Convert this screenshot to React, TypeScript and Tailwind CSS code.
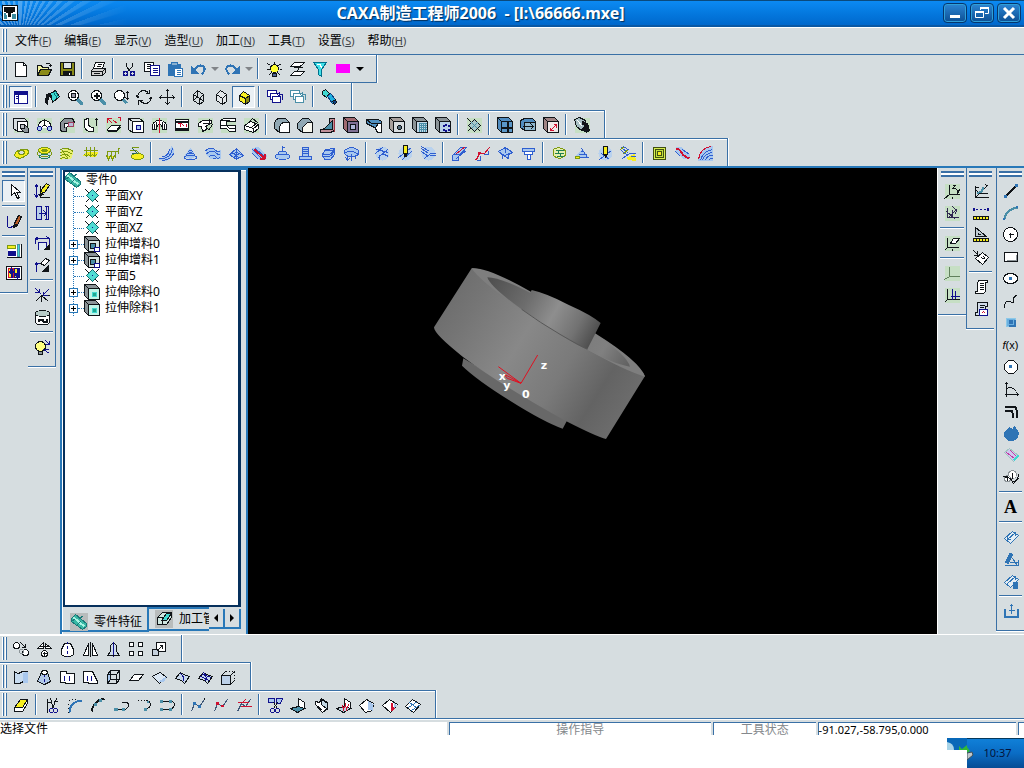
import clsx from "clsx";

type Shape = [d: string, stroke?: string, fill?: string, width?: number];

const K = "#101418";
const W = "#ffffff";
const N = "#10108c";
const B = "#2f5fd0";
const L = "#a9c8ee";
const S = "#2f74b5";
const Y = "#f7ee20";
const O = "#7d9a10";
const T = "#4a8fa8";
const C = "#40d8d0";
const R = "#d01030";
const G = "#8c9498";
const M = "#c6dfc4";

const el = (x: number, y: number, rx: number, ry = rx) =>
    `M${x - rx} ${y}a${rx} ${ry} 0 1 0 ${2 * rx} 0a${rx} ${ry} 0 1 0 ${-2 * rx} 0z`;
const box = (x: number, y: number, w: number, h: number) => `M${x} ${y}h${w}v${h}h${-w}z`;

const tint: Shape = [box(0, 0, 15, 15), "none", M];
const halo: Shape = [el(8, 8, 7), "none", "#b9d2ee"];
const cube = (front: string, side = G): Shape[] => [
    ["M0 0h11l4 4v11h-11l-4-4z", K, side],
    [box(4, 4, 11, 11), K, front],
    ["M0 0l4 4", K],
];
const pencil: Shape[] = [["M6 10l1-4l5-6l3 2l-5 7z", K, Y], ["M5 12l1-3l3 2z", K, K]];

const icons: Record<string, Shape[]> = {
    new: [["M2 1h8l3 3v11h-11z", K, W], ["M10 1v3h3", K]],
    open: [["M1 13v-9h4l1 2h6v3", K, "#f3f3a0"], ["M1 14l3-6h11l-3 6z", K, "#8a8a18"], ["M9 3q2-3 5 0v2M12 4h3", K]],
    save: [[box(1, 1, 14, 13), K, "#8a8a18"], [box(4, 1, 8, 6), K, "#dfe5e8"], [box(4, 10, 8, 4), K, K], ["M10 11v2", W]],
    print: [["M5 1h9l-2 6h-9z", K, W], ["M7 3h4M6 5h4", K], ["M1 9l2-2h12v4l-3 3h-11z", K, "#d0d0d0"], ["M1 10h11l3-3M12 10v4M3 12h6", K]],
    cut: [["M5 1v4l4 5M11 1v4l-5 5", K], [el(4, 12, 2), N, "none", 1.5], [el(11, 12, 2), N, "none", 1.5]],
    copy: [[box(0, 1, 9, 9), K, W], ["M2 3h4M2 5h4M2 7h4", K], [box(6, 4, 9, 10), N, W], ["M8 7h5M8 9h5M8 11h5", N]],
    paste: [["M1 3h12v11h-12z", S, S], ["M4 1h6v3h-6z", S, "#8ab0d0"], [box(7, 7, 8, 8), S, W], ["M9 9h4M9 11h4M9 13h4", S]],
    undo: [["M1 5v7h7z", S, S], ["M4 8q5-6 9-3q3 3-2 8", S, "none", 2]],
    redo: [["M15 5v7h-7z", S, S], ["M12 8q-5-6-9-3q-3 3 2 8", S, "none", 2]],
    bulb: [["M8 0v2M1 2l3 2M15 2l-3 2M0 8h3M13 8h3M2 14l3-3M14 14l-3-3", K], [el(8, 7, 4), K, "#ffff30"], [box(6, 12, 4, 3), K, "#50689c"]],
    layer: [["M5 1h10l-4 4h-10z", K, W], ["M5 10h10l-4 4h-10z", K, W], ["M11 4l-4 7M4 6h9", K]],
    filter: [["M1 1h13l-5 7v7l-3-2v-5z", "#00708c", "#40e0e8"], ["M4 3h4l1 4", W]],
    color: [[box(1, 3, 13, 8), "#ff00ff", "#ff00ff"]],
    panel: [[box(1, 2, 13, 12), N, W], ["M1 3h13", N, "none", 2], ["M1 5h13M5 5v9M2 7h2M2 9h2", N]],
    fill: [["M6 4l5-3l4 6l-7 6z", K, C], ["M9 3l4 6M11 2l3 5", "#007070"], ["M6 4l-4 1l-1 8l2 2l1-8l3 1z", K, K]],
    zoomWin: [[el(6, 6, 5), K, W], [box(4, 4, 4, 4), K, "#9999aa"], ["M10 10l5 5", T, "none", 3]],
    zoomIn: [[el(6, 6, 5), K, W], ["M3 6h6M6 3v6", K, "none", 2], ["M10 10l5 5", T, "none", 3]],
    zoomDyn: [[el(6, 6, 5), K, W], ["M10 10l3 4", T, "none", 3], ["M14 2v8M12 4l2-2l2 2M12 8l2 2l2-2", K]],
    rotate: [["M1 7q1-6 7-6l4 2M15 8q-1 6-7 6l-4-2", K], ["M13 0v4h-4M2 15v-4h4M0 6l1 2l2-1M13 9l2-1l1 2", K]],
    pan: [["M8 0v15M0 8h16M6 2l2-2l2 2M6 13l2 2l2-2M2 6l-2 2l2 2M13 6l2 2l-2 2", K]],
    wire: [["M3 5l4-4l6 4v7l-4 3l-6-4z", K], ["M3 5l6 4l4-4M9 9v6M7 1v6l-4 4M7 7l6 5", K]],
    hide: [["M3 5l4-4l6 4v7l-4 3l-6-4z", K, "#e4e8ea"], ["M3 5l6 4l4-4M9 9v6", K]],
    shade: [["M3 6l4-4l6 4v6l-4 3l-6-4z", K, Y], ["M9 9l4-3v6l-4 3z", K, "#8a8a10"], ["M3 6l6 3", K]],
    win1: [[box(0, 1, 9, 6), N, W], [box(3, 4, 9, 6), N, W], [box(5, 7, 8, 6), N, W], ["M12 5h3v5M10 5l2-2v4z", N]],
    win2: [[box(0, 1, 9, 6), T, W], [box(3, 4, 9, 6), T, W], [box(5, 7, 8, 6), T, W], ["M12 5h3v5M10 5l2-2v4z", T]],
    torch: [["M1 2l3-2l4 4l-3 4l-4-3z", K, C], ["M6 7l3-3l5 6l-3 4z", "#104080", "#20b0e0"], ["M11 12l3-2l1 3l-2 2z", K, "#104080"]],

    extrude: [tint, ["M0 1h11l3 3v10h-10l-4-3z", K, "#d8dde0"], [box(4, 4, 10, 10), K, W], ["M7 7h4l4 4v4h-4l-4-4z", K, G], [box(7, 7, 4, 4), K, "#c0c4c8"]],
    revolve: [tint, ["M2 10q0-7 6-7t7 7M5 10q3-4 6 0", K, W], [el(3, 11, 2), N, L], [el(13, 11, 2), N, L], ["M8 1v6", K]],
    loft: [tint, ["M1 12v-7l4-4h8l2 4l-4 4h-4v5h-5z", K, G], ["M5 10v-4h8", K, W], [box(9, 5, 5, 4), "#a04060", "#b8bcd8"]],
    sweep: [tint, ["M2 2l4-1v5q0 4 5 4v4q-9 1-9-6z", K, W], ["M14 8v-7M12 3l2-2l2 2", K]],
    thicken: [tint, ["M2 12l4-4h9l-4 5h-9z", K, W], ["M2 14h9l4-4", K], ["M12 6l-4-3M2 1h4M2 1v4M2 1l5 5M15 3v-3h-3", R]],
    cutExt: [tint, ["M0 1h11l4 3v11h-11l-4-3z", K, "#dfe5e8"], [box(4, 4, 11, 11), K, W], ["M0 1l4 3", K], [box(8, 8, 4, 4), N, L]],
    cutRev: [tint, ["M1 12q-1-9 7-9t7 9h-4q0-5-3-5t-3 5z", K, W], ["M5 4v8M11 4v8M3 6v5M13 6v5", K], ["M8 0v15", R]],
    cutLoft: [tint, [box(1, 2, 13, 11), K, W], ["M1 4h13M1 11h13", K, "none", 2], ["M3 6h3v3M7 6l3 3M12 6v3", R]],
    cutSweep: [tint, ["M1 6l4-3h9v3l-5 2v4l-4 2l-1-5h-3z", K, W], ["M5 6h6M8 9l4 4M12 1v5M15 7l-4 6", K]],
    cutThick: [tint, ["M0 3l3-2h12v3h-9v4h9v6h-6l-3-3h-6z", K, W], ["M0 3h9M6 8l3 3h6M0 8h6", K]],
    cutSurf: [tint, ["M1 8l6-4l8 3v4l-5 4l-9-3z", K, W], ["M1 8l9 3l5-4M5 5l4-4l5 4l-5 4", K], ["M10 11v4", K]],
    fillet: [["M0 6q1-5 5-5h6l4 4v10h-10l-5-4z", K, "#90a8b4"], ["M5 15v-5q1-5 5-5h5v10z", K, W]],
    chamfer: [["M0 6l5-5h6l4 4v10h-10l-5-4z", K, "#90a8b4"], ["M5 15v-5l5-5h5v10z", K, "#f8f8f0"]],
    rib: [["M0 12l9-2v-9h5v12l-4 2h-10z", K, "#c09098"], ["M3 12l9-9v9z", K, T], ["M14 1v13", "#a03040"]],
    shell: [...cube("#807094", "#a06a70"), [box(7, 7, 5, 5), K, "#b0b8d8"]],
    draft: [["M0 2h12l3 2v11h-4l-3-5l-8-4z", K, "#5090c0"], ["M0 2l5 4h10", K], ["M9 10l3-4h3v9h-4z", K, W]],
    hole: [...cube("#d8dde0", "#a8a09c"), [el(10, 10, 2), K, "#506878"]],
    arrayLin: [...cube("#c4d8e8"), ["M6 6h8M6 8h8M6 10h8M6 12h8M7 5v9M9 5v9M11 5v9M13 5v9", T]],
    arrayCir: [...cube("#b8d0e8"), ["M10 6v2M7 8h2M12 8h2M7 12h2M12 12h2M10 12v2", N, "none", 2]],
    plane: [tint, ["M1 1l13 13M1 14l3-3", K], ["M8 2l6 6l-6 6l-6-6z", K, "#a8c8c8"], ["M5 5l6 6M11 5l-6 6", T]],
    mold: [...cube("#5a96c8", "#508cc0"), ["M10 4v11M4 10h11", K, "none", 2]],
    parting: [["M0 3l4-2h8l3 3v9h-11l-4-3z", K, "#508cc0"], [box(4, 5, 11, 8), K, "#90b8d0"], ["M2 9h11l-3-3M13 9l-3 3", K]],
    scale: [...cube("#f0e8e8", "#a08484"), ["M7 13l6-6M10 7h3v3M7 10v3h3", R]],
    bool: [tint, ["M0 2l5-2l6 3v5l-4 5l-5-4z", K, "#a8c0c4"], ["M8 4q7 1 6 8h2l-4 3l-5-3h3q2-4-2-5z", K, K], ["M3 3l5 6", W]],

    mill1: [["M1 10q1-7 13-6q3 4-3 7q-6 4-10-1z", O, Y], [el(8, 7, 3, 2), O, "#d8dde0"]],
    mill2: [[el(8, 5, 6, 3), O, Y], [el(8, 8, 7, 3), O], [el(8, 11, 5, 2), "#208060"], [el(8, 5, 3, 1), O]],
    mill3: [["M1 5l6-2l7 3l-2 7l-10 1z", "none", "#eaf070"], ["M1 4q6-3 13 2M1 7q6-3 12 2M1 10q6-3 10 2M1 13q4-2 7 1M3 5l6 9", O]],
    mill4: [["M1 10l4-3h10l-2 4z", Y, Y], ["M4 1v10M8 1v10M12 1v10M2 9l2 2l2-2M6 9l2 2l2-2M10 9l2 2l2-2M1 5h14", O]],
    mill5: [["M2 13v-7M6 13v-7M10 12v-7M13 8v-6M1 6h11l2-3", O], ["M1 10l2 4l2-4M5 10l2 4l2-4", O, Y]],
    mill6: [["M3 2h7M1 5h7l3 3", O], [el(9, 11, 6, 3), O, Y], ["M4 3l6 6M3 8h4", "#206060"]],
    fin1: [["M12 0q5 6 0 12t-12 2l8-5z", "none", L], ["M0 13q11 1 13-10M2 11q7 0 8-7M3 15q9-1 11-7", B]],
    fin2: [["M8 3l5 8l-5 2l-6-2z", L, L], [el(8, 12, 6, 2), B], [el(8, 9, 4, 1), B], [el(8, 6, 2, 1), B]],
    fin3: [["M1 6q5-5 8-2t6 1v8h-10l-4-4z", L, L], ["M0 5q6-4 9-1t6 2M1 8q6-4 9-1t5 2M4 11q4-3 6 0t4 1M7 14q2-2 4 0", B]],
    fin4: [["M1 9l7-6l7 7l-7 4z", B, L], ["M8 3v11M4 7l7 6M12 7l-7 5M1 9l7-2l7 3", B]],
    fin5: [["M1 3l6-1l8 8l-1 4h-6l-7-7z", L, L], ["M1 4l10 10M4 3l10 9M1 8l6 6", B], ["M3 4l10 9M13 13h-5M13 13v-5", R, "none", 2]],
    fin6: [[el(8, 11, 7, 3), B, L], ["M3 9h10l-2-3h-6z", B, L], ["M8 6v-5M8 1l3 2", B]],
    fin7: [["M5 2h6v9h3v3h-12v-3h3z", B, L], ["M5 4h6M5 6h6M5 8h6M4 11h8", B]],
    fin8: [["M2 9l3-5l9-1v6l-4 5h-6z", B, L], ["M2 9q9 2 12-6M2 11q9 2 12-6M4 5h8", B]],
    fin9: [["M1 8v-3q7-6 14 0v4l-4 2h-7z", B, L], ["M1 8q6-5 14 1M4 9v6M8 8v7M12 9v4M2 12l2 3l2-2", B]],
    rest1: [halo, ["M1 8l8-7M4 12l10-9M2 4l12 3M5 9v5M8 8l6 3", B]],
    rest2: [halo, ["M1 12l13-10M5 14l10-9", B], [box(6, 0, 4, 8), K, Y], ["M7 9h2v2h-2z", K, K]],
    rest3: [halo, ["M1 3l7 5M1 6l7 5M4 13l6-5h5M9 10h6M1 1l8 5", B]],
    wire1: [["M1 10l8-8h6l-8 9v4h-6z", B, L], ["M4 14l9-9M7 11l8-6M2 9h6", B], ["M5 8l9-7", R]],
    wire2: [["M0 14h2l3-6h5l5-6", R], [box(4, 7, 2, 1), R, R], ["M2 15h4v-5M9 9h5v-4", B]],
    wire3: [["M1 6l7-4l7 5l-4 2v4l-7-4z", B, L], ["M1 6l6 4l8-3M8 2v5M5 13v-3M11 13v-3", B]],
    wire4: [["M2 3h12v3h-12z", B, L], ["M4 6v3h8v-3M7 9v5h3v-5", B, W]],
    topo1: [["M2 4q5-4 12 1q2 6-6 8q-8-1-6-9z", O, "#e6efae"], ["M4 5h8M3 8h9M5 11h7M6 5l4 6", "#208050"]],
    topo2: [["M8 3l6 9h-9l-4-2z", "none", L], ["M2 12h12M4 9h8M6 6h3M7 3l6 9", B], [box(1, 11, 4, 2), O, Y]],
    topo3: [halo, ["M2 14l12-9M4 8l8 6", B], [box(6, 1, 4, 8), K, Y], ["M7 9l1 3l2-3", K, K]],
    topo4: [["M7 12l7-3l1 6l-7-1z", Y, Y], ["M1 2l7 6M1 5l6 5M2 13l7-5h6M10 11h5M3 1l6 4", B], ["M0 4l4-3M3 8l5-4", O]],
    pocket: [[box(2, 2, 12, 12), "#405010", "#d8ee50"], [box(4, 4, 8, 8), "#405010", "#c0e040"], [box(6, 6, 4, 4), "#405010", Y]],
    curveCut: [["M1 1h5l9 8v4h-6l-8-7z", "none", L], ["M1 3q4 0 6 4t8 6", R, "none", 2], ["M1 6l5 5M8 4l7 5", B]],
    fan: [["M1 15q1-13 14-14v14z", L, L], ["M1 14q2-12 13-13", R], ["M3 15q2-9 12-11M5 15q2-7 10-8M8 15q1-5 7-5M11 15q1-2 4-2", B]],

    select: [["M5 1v11l3-3l3 6l2-1l-3-5h4z", K, W]],
    sketch: [["M1 2v11q1 2 3 1l4-2", N], ["M8 10l4-8l3 1l-4 9z", K, "#b85c28"], ["M8 10l3 2l-4 2z", K, K]],
    attr: [[box(1, 1, 13, 13), "none", W], [box(1, 2, 8, 3), O, Y], [box(2, 8, 7, 4), N, N], [box(11, 1, 2, 12), T, C], ["M0 14h15v-14", K]],
    swap: [[box(0, 1, 15, 13), K, W], [box(2, 3, 5, 9), R, Y], [box(8, 3, 5, 9), N, Y], ["M3 8l2-4l2 4M5 4v8M9 8l2 4l2-4M11 3v8", N, "none", 2]],
    edit1: [["M2 1v13M0 4l2-3l2 3M0 11l2 3l2-3", N], ["M6 2v12h9", K], ...pencil],
    edit2: [[box(2, 1, 5, 13), N, "#b9cfe8"], ["M10 1h4v13h-4M12 1v13M4 8h8", N], ["M9 5l3 3l-3 3", N]],
    edit3: [["M1 8v-5h14v5M1 3l3-2M1 3l3 2M15 3l-3-2", N], ["M4 14v-7h8v7", N, "#dfe9f4"], ["M10 14h5v-5z", K, K]],
    edit4: [["M2 14v-8h4M0 8l2-3l2 3", N], ["M6 6l5-5l4 2l-5 5z", K, W], ["M8 14h6v-6z", K, K]],
    axis1: [["M7 8l-6 6M7 8l7 6M7 8v6M7 8h8", K], ["M0 5h5v-4M1 1l6 6M9 4v4h4M14 2l-5 5", N]],
    drum: [["M1 5v8l2 2h10l2-2v-8z", K, W], [el(8, 4, 7, 3), K, "#b8ccc8"], ["M4 12v-2h4l1 2h3v-3", K, "none", 2]],
    lamp: [[el(6, 7, 5), K, "#ffff80"], [box(4, 12, 4, 3), K, G], ["M11 1l4 4M15 1v4h-4M9 10l6 4M10 10h4", N]],

    csys1: [tint, ["M5 1v10h10M5 11l-5 4", K], ["M8 2h3l-3 3h3M12 6l2 3M15 6l-3 6M8 13v2", K]],
    csys2: [tint, ["M3 2v10h11M4 12l8-8l-1 5M8 1l4 4M2 6l9 8M8 4v8", "#302850"]],
    csys3: [tint, ["M3 2v10h11M3 12l-3 3", K], ["M6 8l3-5h6l-4 5z", K, W], ["M8 13v2", K]],
    csys4: [tint, ["M5 1v10h10M5 11l-5 3", "#60805c"]],
    csys5: [tint, ["M3 1v11h12M3 12l-3 3", K], ["M8 1v11M11 3v8M6 9h9", N]],
    meas1: [["M2 2v12h13M2 14l12-12M1 4h4M12 1l3 2M3 7l3 3M5 10h9", K], ["M10 4q-2 6-6 5", T, "none", 2]],
    meas2: [["M2 4h2M6 4h2M10 4h2", N], [box(0, 3, 1, 2), N, N], [box(14, 3, 1, 2), N, N], [box(0, 11, 15, 3), K, Y], ["M3 11v2M6 11v2M9 11v2M12 11v2", K]],
    meas3: [["M2 0v9h11z", K, "#c0ccd4"], ["M5 5v2h2", K], [box(0, 11, 15, 3), K, Y], ["M3 11v2M6 11v2M9 11v2M12 11v2", K]],
    meas4: [["M2 9l7-6l6 5l-6 7z", K, W], ["M0 1l5 5M4 1v5h-4M8 8l3 2M10 7l2 3", K]],
    page1: [["M5 1h9v2h-2v9l-2 2h-8v-2h2v-8z", K, W], ["M6 4h4M6 6h4M6 8h4M6 10h4", K]],
    page2: [["M4 1h10v4h-2v9h-10v-3h2z", K, "#d2dcea"], ["M6 4h5M6 6h4", K], [box(6, 8, 8, 6), N, W], ["M8 12l2-2l2 2", R]],
    line: [["M2 13L13 2", K, "none", 2], [box(1, 12, 2, 2), S, S], [box(12, 1, 2, 2), S, S]],
    arc: [["M1 14q1-10 13-12", T, "none", 2], [box(0, 13, 1, 1), S, S], [box(13, 1, 1, 1), S, S]],
    circle: [[el(7, 7, 7), K, W], ["M5 7h5M7 5v5", K]],
    rect: [[box(1, 3, 13, 9), K, W], ["M13 5v6h-10", G]],
    ellipse: [[el(7, 7, 7, 5), K, W], [box(6, 6, 2, 2), S, S]],
    spline: [["M1 14q0-8 5-6t4-1t4-6", K]],
    point: [[box(3, 3, 9, 8), "#8cc8e8", "#6cb0e0"], ["M5 10h6v-6", S, "none", 2], [box(6, 5, 3, 3), S, S]],
    hexagon: [["M5 1h5l4 4v5l-4 4h-5l-4-4v-5z", K, W], [box(6, 6, 2, 2), S, S]],
    graph: [["M3 15v-14M1 3l2-2l2 2M1 13h14l-2-2M15 13l-2 2M3 8q4-5 10 2", K]],
    offset: [["M1 3h9q3 0 3 3v8", K, "none", 2], ["M1 7h6q2 0 2 2v5", K, "none", 2]],
    teapot: [["M1 7l5-5l3 2l2-3l4 6l-1 5l-4 3h-5l-4-4z", S, S]],
    eraser3: [["M1 5l5-4l9 7l-5 6z", "#a0c8c0", "#d0c8f0"], ["M3 5l8 6M7 3l6 6", "#c040a0"], ["M10 13l5-5", C, "none", 2]],
    combine: [[el(9, 5, 4), G, W], [el(4, 9, 3), G, W], ["M0 7q4-1 6 2t4 3t5-5v-3M9 3v6", K], ["M1 8h3v3M7 9l3 5l5-5", K]],
    dim1: [["M1 9l8-7l6 4l-8 8z", S, "#e4edf4"], ["M4 10l8-7M4 7v3h3M9 3h3v3", S]],
    dim2: [["M3 12l5-10", S, "none", 4], ["M1 14h14v-6M9 7l5 7M6 11h9", S]],
    dim3: [["M1 9l8-7l6 4l-8 8z", S, "#e4edf4"], ["M4 10l8-7M9 3h3v3", S], [box(10, 9, 4, 6), S, S]],
    trough: [["M1 5v8h13v-8", S, "none", 2], ["M8 1v9M6 3l2-2l2 2M5 7h6", S]],

    g1: [[el(3, 4, 3), K, W], [el(12, 11, 3), K, W], ["M7 1l5 5M12 2v4h-4", K], [el(8, 10, 2), G]],
    g2: [["M1 7l6-6v6zM9 2l6 5h-6zM3 5h10", K, W], [el(8, 12, 3), K, W], ["M8 10v4M6 12h4", K]],
    g3: [["M5 2h6l3 6v5l-3 2h-6l-3-2v-5z", K, W], ["M8 0v2M8 4v3M8 9v3M8 14v2", N]],
    g4: [["M6 2v12h-5zM10 2v12h5z", K, W], ["M8 0v16", K]],
    g5: [["M5 4q3-4 6 0v6l3 4h-12l3-4z", K, "#d0dcec"], ["M8 0v16", N], ["M2 14h12", K]],
    g6: [[box(1, 1, 4, 4), K, W], [box(10, 1, 4, 4), K, W], [box(1, 10, 4, 4), K, W], [box(10, 10, 4, 4), K, W]],
    g7: [[box(5, 1, 9, 9), K, W], [box(1, 8, 6, 6), K, "#c4d0dc"], ["M5 10l6-6M8 4h3v3", K]],
    s1: [["M1 2q3 3 6 1t7-1v11q-3-2-6 0t-7 1z", K, "#c8dcf0"], ["M9 4l5-2v11l-5 1z", "none", L]],
    s2: [["M5 3h6l3 9l-6 3l-7-3z", K, "#b0c8e8"], ["M8 0v2M8 4v3M8 9v3", N], [el(8, 3, 3, 2), K, W]],
    s3: [["M1 2h6v2h8v10h-9v-1h-5z", K, W], ["M5 11v-4M10 11v-4M4 8l1-1l1 1M9 8l1-1l1 1", N]],
    s4: [["M1 2h9l5 10v2h-9v-1h-5z", K, W], ["M5 11v-4M9 11v-4M4 8l1-1l1 1M8 8l1-1l1 1", N]],
    s5: [["M5 1h9v9h-9z", K], ["M2 5l3-4v9l-3 4z", K, L], ["M2 5h9v9M2 14h9M11 5l3-4M11 14l3-4", K]],
    s6: [["M1 11l5-6h9l-5 6z", K, W]],
    s7: [["M1 7l5-3l3-1l6 5l-7 6z", K, "#dce8f4"], ["M8 12l6-4l-2 4z", L, L]],
    s8: [["M1 9l5-6l3 2l6 2l-5 7l-3-3z", K, "#c8d8ec"], ["M6 4q4 3 3 8", N]],
    s9: [["M1 9l5-6l3 2l6 2l-5 7l-3-3z", K, "#c8d8ec"], ["M6 3q4 4 2 9M3 7l9 4M5 5l9 3", N]],
    s10: [["M1 6h9v9h-9z", K, "#bcd0e8"], ["M1 6l4-4M10 6l4-4M10 15l4-4", K], ["M5 2h1M8 2h1M11 2h1M14 2v1M14 5v1M14 8v1", K]],
    erase: [["M1 10l6-8h7l-5 8v3h-6z", K, Y], ["M1 10h8l5-8v4l-5 8h-8z", K, W], ["M1 10l6-8h7l-5 8z", K, Y]],
    trim: [["M6 1l3 10M12 1l-4 10M2 5h5M3 1v14M9 4h4", K], [el(7, 13, 2), N], [el(11, 13, 2), N]],
    round: [["M2 15q0-11 13-12", S, "none", 2], ["M1 15v-1M1 11v-1M1 7v-1M1 3h1M4 2h1M7 2h1", K]],
    bevel: [["M1 14q2-8 7-11l6-2", K, "none", 2], [box(4, 6, 2, 2), T, T], [box(9, 2, 2, 2), T, T]],
    ext1: [["M1 12h10q4-1 4-5q-1-3-6-2", K], [box(1, 11, 3, 2), T, T], [box(9, 11, 2, 2), T, T]],
    ext2: [["M1 3h1M4 3h1M7 3h1M10 3q4 1 4 4t-5 5h-2", K], [box(8, 11, 2, 2), T, T], [box(11, 4, 1, 1), T, T]],
    ext3: [["M2 4h9q4 0 4 3t-4 5h-9", K], [box(1, 3, 2, 2), T, T], [box(1, 11, 2, 2), T, T], [box(10, 3, 2, 2), T, T], [box(10, 11, 2, 2), T, T]],
    cv1: [["M1 14l3-8l5 3l5-7", "#405878"], [box(3, 5, 2, 2), S, S], [box(8, 8, 2, 2), S, S], ["M14 2v-2", K]],
    cv2: [["M1 14l3-8l5 3l5-7", "#405878"], [box(3, 5, 2, 2), R, R], ["M7 8h3", R, "none", 2]],
    cv3: [["M1 14l4-8l4 3l5-7", "#405878"], ["M1 5h11M4 9h11", R], ["M9 2l-4 4", R]],
    f1: [["M1 1h6v4h-6zM9 1h6l-2 5h-4z", N, L], ["M6 5l4 6M10 5l-4 6", K], [el(5, 13, 2), N], [el(10, 13, 2), N]],
    f2: [["M8 1l6 4v6l-6-1z", K, W], ["M0 11l8-2l6 2l-7 4z", K, T]],
    f3: [["M2 4l4 1l2-4l6 4v6l-5 4l-7-8z", K, W], ["M8 2l6 4v6l-6-5z", K, "#c4d8e4"], ["M2 7l7 6", K]],
    f4: [["M8 1l6 4v6l-6-1z", K, W], ["M0 11l8-2l6 2l-7 4z", K, "#c0d4e0"], ["M6 8l1 4l2-5l1 5l2-5", R]],
    f5: [["M0 8l7-6l7 4l-1 7l-7 2z", K, W], ["M8 3l6 4l-1 6l-5-1z", "none", L]],
    f6: [["M0 8l7-6l8 5l-7 8z", K, W], ["M9 5v8M9 13l3-3", R, "none", 2], ["M11 5l3 3l-3 4z", "none", L]],
    f7: [["M0 9l7-7l8 5l-7 8z", K, W], ["M3 10l9-6M6 13l9-6M4 5l8 6", S]],

    partRoot: [["M0 4l4-4l11 9v3l-4 3l-11-8z", "#187878", "#38b8a4"], ["M2 3l11 9", "#a8f4e4", "none", 2], ["M0 7l4-3M5 11l4-4M8 4l4-3", "#187878"]],
    datum: [["M1 1l13 13M1 14l3-3M11 4l3-3", K], ["M8 1l6 6l-6 6l-6-6z", "#107070", "#50dcd4"], ["M7 7h1", N]],
    addFeat: [...cube("#d8e4e4"), ["M6 7h5v5h-5z", K, T], [box(10, 11, 5, 4), N, W]],
    cutFeat: [...cube("#c0f4e8"), [box(8, 8, 4, 4), C, "#20a890"]],
    camTab: [["M1 6l5-5h9v5l-5 7h-9z", K, "#cfe6e0"], ["M5 9l5-7h5l-5 7z", K, C], ["M1 6h5v7", K]],
};

const rowFile = "new open save | print | cut copy paste undo v redo v | bulb layer filter color V";
const rowView = "*panel | fill zoomWin zoomIn zoomDyn rotate pan | wire hide *shade | win1 win2 | torch";
const rowFeature =
    "extrude revolve loft sweep thicken cutExt cutRev cutLoft cutSweep cutThick cutSurf | fillet chamfer rib shell draft hole arrayLin arrayCir | plane | mold parting scale | bool";
const rowMill =
    "mill1 mill2 mill3 mill4 mill5 mill6 | fin1 fin2 fin3 fin4 fin5 fin6 fin7 fin8 fin9 | rest1 rest2 rest3 | wire1 wire2 wire3 wire4 | topo1 topo2 topo3 topo4 | pocket curveCut fan";
const rowGeom = "g1 g2 g3 g4 g5 g6 g7";
const rowSurface = "s1 s2 s3 s4 s5 s6 s7 s8 s9 s10";
const rowCurve = "erase | trim round bevel ext1 ext2 ext3 | cv1 cv2 cv3 | f1 f2 f3 f4 f5 f6 f7";

const colState = "*select | sketch | attr swap";
const colPath = "edit1 edit2 | edit3 edit4 | axis1 drum | lamp";
const colCsys = "csys1 csys2 | csys3 | csys4 csys5";
const colMeasure = "meas1 meas2 meas3 meas4 | page1 page2";
const colDraw =
    "line arc circle rect ellipse spline point fx hexagon graph offset teapot eraser3 combine | text | dim1 dim2 dim3 | trough";

const menus = [
    ["文件", "F"], ["编辑", "E"], ["显示", "V"], ["造型", "U"],
    ["加工", "N"], ["工具", "T"], ["设置", "S"], ["帮助", "H"],
];

const tree = [
    { icon: "datum", label: "平面XY" },
    { icon: "datum", label: "平面YZ" },
    { icon: "datum", label: "平面XZ" },
    { icon: "addFeat", label: "拉伸增料0", open: true },
    { icon: "addFeat", label: "拉伸增料1", open: true },
    { icon: "datum", label: "平面5" },
    { icon: "cutFeat", label: "拉伸除料0", open: true },
    { icon: "cutFeat", label: "拉伸除料1", open: true },
];

function Icon({ name }: { name: string }) {
    if (name === "fx") return <span className="font-['Liberation_Sans'] text-[11px] leading-4"><i>f</i>(x)</span>;
    if (name === "text") return <span className="font-['Liberation_Serif'] text-lg font-bold leading-5">A</span>;
    return (
        <svg className="h-4 w-4 shrink-0" viewBox="0 0 16 16" shapeRendering="crispEdges" aria-hidden="true">
            <g transform="translate(.5 .5)">
                {icons[name].map(([d, stroke = K, fill = "none", width = 1], i) => (
                    <path key={i} d={d} stroke={stroke} fill={fill} strokeWidth={width} />
                ))}
            </g>
        </svg>
    );
}

function Tool({ name, vertical }: { name: string; vertical?: boolean }) {
    if (name === "|") {
        return vertical ? (
            <div className="flex h-2 w-full items-center px-0.5">
                <div className="h-0.5 w-full border-t border-[#3a70a6] bg-white" />
            </div>
        ) : (
            <div className="flex h-full w-2 justify-center py-[3px]">
                <div className="w-0.5 border-l border-[#3a70a6] bg-white" />
            </div>
        );
    }
    if (name === "v" || name === "V") {
        return (
            <button aria-label="更多" className="flex h-[22px] w-[11px] items-center justify-center">
                <span className={clsx("border-x-4 border-t-4 border-x-transparent", name === "V" ? "border-t-black" : "border-t-[#808488]")} />
            </button>
        );
    }
    const pressed = name.startsWith("*");
    const icon = pressed ? name.slice(1) : name;
    return (
        <button
            aria-label={icon}
            className={clsx(
                "flex h-[22px] w-[23px] items-center justify-center text-black",
                pressed && "border border-[#3a70a6] border-r-white border-b-white bg-[#eaf0f4]",
            )}
        >
            <Icon name={icon} />
        </button>
    );
}

function ToolRow({ items, className }: { items: string; className: string }) {
    return (
        <div className={clsx("flex w-fit items-center border-[#3a70a6] pl-0.5 pr-[11px] shadow-[1px_0_0_#fff,inset_0_1px_0_#fff]", className)}>
            <Grip />
            {items.split(" ").map((name, i) => <Tool key={i} name={name} />)}
        </div>
    );
}

function Grip() {
    return (
        <div className="mr-0.5 flex h-full shrink-0 gap-px py-0.5">
            <div className="w-[2px] border-r border-[#3a70a6] bg-white" />
            <div className="w-[2px] border-r border-[#3a70a6] bg-white" />
        </div>
    );
}

function ToolColumn({ items, className }: { items: string; className?: string }) {
    return (
        <div className={clsx("flex w-7 shrink-0 flex-col items-center self-start border-b border-r border-[#3a70a6] pb-2 shadow-[0_1px_0_#fff]", className)}>
            <div className="mb-[3px] mt-[3px] h-[6px] w-[23px] border-y-2 border-b-[#3a70a6] border-t-[#3a70a6] bg-white" />
            {items.split(" ").map((name, i) => <Tool key={i} name={name} vertical />)}
        </div>
    );
}

function TitleBar() {
    const button = "flex h-5 w-6 items-center justify-center rounded-sm border border-[#06366c] bg-linear-to-b from-[#2c86d4] to-[#0b4f94] text-white shadow-[inset_0_0_0_1px_#2fa0d8]";
    return (
        <header className="relative flex h-[27px] shrink-0 items-center border-b-2 border-t border-b-[#0a58a4] border-t-[#0a4a7c] bg-linear-to-b from-[#0c8af2] to-[#0068cc] px-0.5">
            <div className="absolute inset-y-0 left-0 w-32 bg-[repeating-conic-gradient(from_0deg_at_20px_42px,#ffffff55_0deg_3deg,transparent_4deg_7deg)] [mask-image:linear-gradient(to_right,#000,transparent)]" />
            <svg className="relative h-4 w-4" viewBox="0 0 16 16" shapeRendering="crispEdges" aria-hidden="true">
                <path d="M.5.5h15v15H.5z" fill="#fff" stroke="#08131c" />
                <path d="M2 2h11v5h-2v1H9v4H6V8H4V7H2z" fill="#101010" />
                <path d="M2 8h2v2h1v4H2zM10 9h4v5h-4z" fill="#3c8ca0" />
            </svg>
            <h1 className="relative flex-1 whitespace-pre text-center text-base font-bold leading-6 text-white [text-shadow:1px_1px_1px_#04305c]">
                {"CAXA制造工程师2006  - [l:\\66666.mxe]"}
            </h1>
            <div className="relative flex gap-[3px] pr-px">
                <button aria-label="最小化" className={button}>
                    <svg className="h-4 w-4" viewBox="0 0 16 16"><path d="M3 10h10v3H3z" fill="#fff" /></svg>
                </button>
                <button aria-label="还原" className={button}>
                    <svg className="h-4 w-4" viewBox="0 0 16 16" fill="none" stroke="#fff">
                        <path d="M6.500 5V2.500h8v6H11" /><path d="M6 3h9" strokeWidth="2" />
                        <path d="M1.500 6.500h8v6h-8z" /><path d="M1 7h9" strokeWidth="2" />
                    </svg>
                </button>
                <button aria-label="关闭" className={button}>
                    <svg className="h-4 w-4" viewBox="0 0 16 16"><path d="M3 3l10 10M13 3L3 13" stroke="#fff" strokeWidth="3" /></svg>
                </button>
            </div>
        </header>
    );
}

function FeatureTree() {
    return (
        <section className="ml-1 flex w-[188px] shrink-0 flex-col border-x-2 border-t-2 border-[#2878b8] bg-[#d6dde0] pr-[5px] shadow-[inset_1px_1px_0_#fff]">
            <div className="ml-px min-h-0 flex-1 border-2 border-r-[3px] border-[#06305c] bg-white">
                <div className="flex h-4 items-center gap-[5px]">
                    <Icon name="partRoot" />
                    零件0
                </div>
                <ul className="ml-2 border-l border-dotted border-[#2878b8]">
                    {tree.map(item => (
                        <li key={item.label} className="-ml-[5px] flex h-4 items-center">
                            {item.open ? (
                                <button aria-label={`展开${item.label}`} className="relative flex h-[9px] w-[9px] items-center justify-center border border-[#2878b8] bg-white">
                                    <span className="absolute h-px w-[5px] bg-black" />
                                    <span className="absolute h-[5px] w-px bg-black" />
                                </button>
                            ) : (
                                <span className="w-[9px]" />
                            )}
                            <span className={clsx("border-t border-dotted border-[#2878b8]", item.open ? "w-1.5" : "-ml-1 w-2.5")} />
                            <Icon name={item.icon} />
                            <span className="ml-[5px] whitespace-nowrap">{item.label}</span>
                        </li>
                    ))}
                </ul>
            </div>
            <div className="flex h-[27px] shrink-0 pb-0.5">
                <button className="flex w-[87px] items-center gap-1.5 whitespace-nowrap border-b-2 border-r-2 border-[#2878b8] pl-2 pt-1.5">
                    <span className="bg-[#b8bcbc] p-px"><Icon name="partRoot" /></span>
                    零件特征
                </button>
                <button className="flex h-6 min-w-0 flex-1 items-center gap-1.5 overflow-hidden whitespace-nowrap border-b-2 border-t-2 border-[#2878b8] pl-1.5">
                    <span className="shrink-0 bg-[#b8bcbc] p-px"><Icon name="camTab" /></span>
                    加工管理
                </button>
                <button aria-label="向左" className="mt-0.5 flex h-5 w-4 items-center justify-center border-b-2 border-r-2 border-[#2878b8]">
                    <span className="border-y-4 border-r-4 border-y-transparent border-r-black" />
                </button>
                <button aria-label="向右" className="mt-0.5 flex h-5 w-4 items-center justify-center border-b-2 border-r-2 border-[#2878b8]">
                    <span className="border-y-4 border-l-4 border-y-transparent border-l-black" />
                </button>
            </div>
        </section>
    );
}

function Model() {
    return (
        <svg className="ml-[172px] mt-[82px] h-[200px] w-[240px]" viewBox="0 0 720 600">
            <defs>
                <linearGradient id="body" gradientUnits="userSpaceOnUse" x1="90" y1="140" x2="620" y2="470">
                    <stop offset="0" stopColor="#6e6e6e" />
                    <stop offset=".12" stopColor="#757575" />
                    <stop offset=".4" stopColor="#888888" />
                    <stop offset=".65" stopColor="#7a7a7a" />
                    <stop offset=".85" stopColor="#636363" />
                    <stop offset="1" stopColor="#6c6c6c" />
                </linearGradient>
                <linearGradient id="hub" gradientUnits="userSpaceOnUse" x1="320" y1="150" x2="520" y2="260">
                    <stop offset="0" stopColor="#6c6c6c" />
                    <stop offset=".4" stopColor="#8e8e8e" />
                    <stop offset=".75" stopColor="#727272" />
                    <stop offset="1" stopColor="#505050" />
                </linearGradient>
                <linearGradient id="cavity" gradientUnits="userSpaceOnUse" x1="200" y1="80" x2="640" y2="350">
                    <stop offset="0" stopColor="#4c4c4c" />
                    <stop offset=".3" stopColor="#707070" />
                    <stop offset=".8" stopColor="#808080" />
                    <stop offset="1" stopColor="#5c5c5c" />
                </linearGradient>
            </defs>
            <path d="M130 325L126 347Q170 390 270 452Q370 515 428 536L442 510Z" fill="#686868" />
            <path d="M155 55L42 232Q42 252 128 320Q250 410 436 512Q530 560 558 567L675 378Q650 330 530 255L330 128Q200 55 155 55Z" fill="url(#body)" />
            <path d="M155 55Q200 50 330 124L530 253Q660 335 675 380Q620 365 500 298L305 178Q180 95 155 55Z" fill="#7e7e7e" />
            <path d="M202 82Q240 82 330 128L530 256Q620 315 630 350Q580 342 500 298L305 178Q210 110 202 82Z" fill="url(#cavity)" />
            <path d="M335 120Q380 130 445 164Q515 195 542 219L502 298Q470 285 420 255L308 178Z" fill="url(#hub)" />
            <path d="M305 178Q360 218 420 253T502 298" fill="none" stroke="#585858" strokeWidth="3" />
            <path d="M303 400L353 315M303 400L235 350M303 400L252 372L262 385Z" fill="none" stroke="#e01020" strokeWidth="3" />
            <g className="fill-white font-['DejaVu_Sans'] text-[33px] font-bold">
                <text x="236" y="390">x</text>
                <text x="250" y="418">y</text>
                <text x="362" y="356">z</text>
                <text x="306" y="444">0</text>
            </g>
        </svg>
    );
}

function StatusBar() {
    return (
        <footer className="shrink-0 bg-white">
            <div className="flex h-[17px] gap-0.5 border-t border-[#3a70a6] bg-[#d6dde0] pt-[3px] leading-[14px] shadow-[inset_0_1px_0_#fff]">
                <div className="h-[13px] flex-[448] bg-white">选择文件</div>
                <div className="h-[13px] flex-[262] border-l border-t border-[#3a70a6] bg-white text-center text-[#84888c]">操作指导</div>
                <div className="h-[13px] flex-[102] border-l border-t border-[#3a70a6] bg-white text-center text-[#84888c]">工具状态</div>
                <div className="h-[13px] flex-[198] border-l border-t border-[#3a70a6] bg-white text-[11px]">-91.027,-58.795,0.000</div>
                <div className="h-[13px] w-1.5 border-l border-t border-[#3a70a6] bg-white" />
            </div>
            <div className="flex h-[33px] items-end justify-end">
                <div className="h-[30px] w-5">
                    <svg className="h-3 w-5" viewBox="0 0 20 12" aria-hidden="true">
                        <path d="M0 0h20v12H6L0 6z" fill="#0868b8" />
                        <path d="M0 4q7 1 7 8H0z" fill="#a8d4e8" />
                        <path d="M12 8l3 3 5-4v5h-8z" fill="#30b838" />
                    </svg>
                </div>
                <div className="relative flex h-[30px] w-[57px] items-center justify-center border-t border-[#04385c] bg-linear-to-b from-[#1080d8] via-[#0a6cc4] to-[#064c94] pl-1 text-[11px] text-[#04143c]">
                    <svg className="absolute left-0 top-2 h-4 w-2" viewBox="0 0 8 16" aria-hidden="true">
                        <path d="M0 0l3 4-3 2z" fill="#30b838" />
                        <path d="M0 6l5-1 1 3-6 5z" fill="#c0c8cc" stroke="#405058" />
                    </svg>
                    10:37
                </div>
            </div>
        </footer>
    );
}

export default function App() {
    return (
        <div className="flex h-screen flex-col overflow-hidden bg-[#d6dde0] font-['Noto_Sans','Noto_Sans_CJK_SC',sans-serif] text-xs text-black">
            <TitleBar />
            <nav className="flex h-7 shrink-0 items-center gap-1.5 border-b border-[#3a70a6] pl-0.5 shadow-[inset_0_1px_0_#fff]">
                <Grip />
                <div className="flex gap-[13px]">
                    {menus.map(([label, key]) => (
                        <button key={key} className="whitespace-nowrap">
                            {label}
                            <span className="text-[11px] text-[#404448]">(<u>{key}</u>)</span>
                        </button>
                    ))}
                </div>
            </nav>
            <ToolRow items={rowFile} className="h-7 shrink-0 border-b border-r" />
            <ToolRow items={rowView} className="h-[27px] shrink-0 border-r" />
            <ToolRow items={rowFeature} className="h-7 shrink-0 border-r border-t" />
            <ToolRow items={rowMill} className="h-7 shrink-0 border-r border-t" />
            <main className="flex min-h-0 flex-1 border-b border-t-2 border-b-white border-t-[#2878b8]">
                <ToolColumn items={colState} />
                <ToolColumn items={colPath} />
                <FeatureTree />
                <div className="min-w-0 flex-1 overflow-hidden border-r border-white bg-black">
                    <Model />
                </div>
                <ToolColumn items={colCsys} className="border-r-0" />
                <ToolColumn items={colMeasure} className="border-l border-r-0" />
                <ToolColumn items={colDraw} className="ml-0.5 border-l border-r-0" />
            </main>
            <ToolRow items={rowGeom} className="h-[27px] shrink-0 border-r" />
            <ToolRow items={rowSurface} className="h-7 shrink-0 border-r border-t" />
            <ToolRow items={rowCurve} className="h-7 shrink-0 border-r border-t" />
            <StatusBar />
        </div>
    );
}
